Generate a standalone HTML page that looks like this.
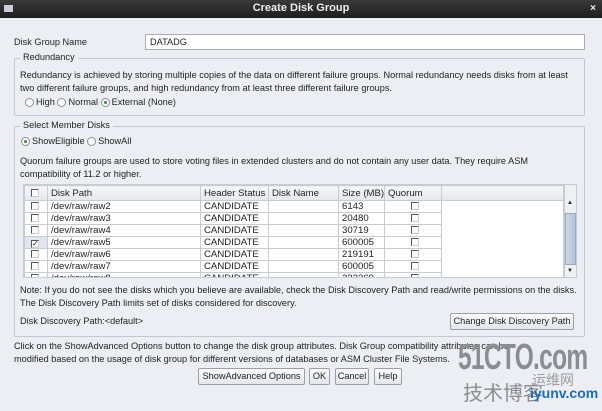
<!DOCTYPE html>
<html><head><meta charset="utf-8"><style>
*{box-sizing:border-box;margin:0;padding:0}
body{width:602px;height:411px;overflow:hidden;background:#eceef3;font-family:"Liberation Sans",sans-serif;font-size:9.2px;color:#222;position:relative}
.a{position:absolute;white-space:nowrap}
#tb{position:absolute;left:0;top:0;width:602px;height:18px;background:linear-gradient(#3a3a3a,#1e1e1e);color:#eee;font-weight:bold;font-size:11px;text-align:center;line-height:17px}
.fs{position:absolute;border:1px solid #c5c8cf;border-radius:2px}
.lg{position:absolute;background:#eceef3;padding:0 3px}
.rb{display:inline-block;width:9px;height:9px;border:1px solid #8a8f99;border-radius:50%;background:#fff;vertical-align:-2px;margin-right:2px;position:relative}
.rb.on::after{content:"";position:absolute;left:2px;top:2px;width:3px;height:3px;border-radius:50%;background:#3a8a3a}
.btn{position:absolute;border:1px solid #9aa0aa;border-radius:2px;background:linear-gradient(#fbfbfc,#e4e6ea);text-align:center;line-height:15px;height:17px;white-space:nowrap}
#tw{position:absolute;left:23px;top:184px;width:541px;height:94px;overflow:hidden;background:#fff;border:1px solid #c8ccd2}
table{border-collapse:collapse;width:541px;font-size:9.6px;table-layout:fixed;white-space:nowrap}
td,th{border:1px solid #c8ccd2;height:12px;padding:0 0 0 3px;font-weight:normal;text-align:left;line-height:11px;overflow:hidden}
th{background:linear-gradient(#f6f7f9,#e5e7eb);height:15px}
.cb{display:inline-block;width:8px;height:8px;border:1px solid #555;border-right-color:#ccc;border-bottom-color:#ccc;background:#fff;vertical-align:-1px;position:relative;font-size:8px;line-height:6px}
</style></head><body>
<div id="tb">Create Disk Group<span style="position:absolute;left:4px;top:5px;width:9px;height:7px;background:#ccd;"></span><span style="position:absolute;right:6px;top:0;font-size:10px">×</span></div>
<div class="a" style="left:14px;top:37px">Disk Group Name</div>
<div class="a" style="left:145px;top:34px;width:440px;height:16px;background:#fff;border:1px solid #aab;padding-left:4px;line-height:14px">DATADG</div>
<div class="fs" style="left:14px;top:58px;width:571px;height:58px"></div>
<div class="lg" style="left:20px;top:52px">Redundancy</div>
<div class="a" style="left:20px;top:69px;line-height:12.5px">Redundancy is achieved by storing multiple copies of the data on different failure groups. Normal redundancy needs disks from at least<br>two different failure groups, and high redundancy from at least three different failure groups.</div>
<div class="a" style="left:25px;top:97px"><span class="rb"></span>High <span class="rb"></span>Normal <span class="rb on"></span>External (None)</div>
<div class="fs" style="left:14px;top:126px;width:571px;height:211px"></div>
<div class="lg" style="left:20px;top:120px">Select Member Disks</div>
<div class="a" style="left:21px;top:136px"><span class="rb on"></span>ShowEligible <span class="rb"></span>ShowAll</div>
<div class="a" style="left:20px;top:155px;line-height:12.5px">Quorum failure groups are used to store voting files in extended clusters and do not contain any user data. They require ASM<br>compatibility of 11.2 or higher.</div>
<div id="tw"><table>
<colgroup><col style="width:23px"><col style="width:153px"><col style="width:68px"><col style="width:70px"><col style="width:46px"><col style="width:57px"><col></colgroup>
<tr><th style="padding-left:6px"><span class="cb"></span></th><th>Disk Path</th><th>Header Status</th><th>Disk Name</th><th>Size (MB)</th><th>Quorum</th><th style="border-right:none"></th></tr>
<tr><td style="padding-left:6px"><span class="cb"></span></td><td>/dev/raw/raw2</td><td>CANDIDATE</td><td></td><td>6143</td><td style="text-align:center"><span class="cb"></span></td><td style="border:none"></td></tr>
<tr><td style="padding-left:6px"><span class="cb"></span></td><td>/dev/raw/raw3</td><td>CANDIDATE</td><td></td><td>20480</td><td style="text-align:center"><span class="cb"></span></td><td style="border:none"></td></tr>
<tr><td style="padding-left:6px"><span class="cb"></span></td><td>/dev/raw/raw4</td><td>CANDIDATE</td><td></td><td>30719</td><td style="text-align:center"><span class="cb"></span></td><td style="border:none"></td></tr>
<tr><td style="padding-left:6px;background:#dfe6f0"><span class="cb">✓</span></td><td>/dev/raw/raw5</td><td>CANDIDATE</td><td></td><td>600005</td><td style="text-align:center"><span class="cb"></span></td><td style="border:none"></td></tr>
<tr><td style="padding-left:6px"><span class="cb"></span></td><td>/dev/raw/raw6</td><td>CANDIDATE</td><td></td><td>219191</td><td style="text-align:center"><span class="cb"></span></td><td style="border:none"></td></tr>
<tr><td style="padding-left:6px"><span class="cb"></span></td><td>/dev/raw/raw7</td><td>CANDIDATE</td><td></td><td>600005</td><td style="text-align:center"><span class="cb"></span></td><td style="border:none"></td></tr>
<tr><td style="padding-left:6px"><span class="cb"></span></td><td>/dev/raw/raw8</td><td>CANDIDATE</td><td></td><td>232369</td><td style="text-align:center"><span class="cb"></span></td><td style="border:none"></td></tr>
</table></div>
<div class="a" style="left:564px;top:184px;width:13px;height:94px;background:#eef0f3;border:1px solid #c8ccd2"></div>
<div class="a" style="left:565px;top:213px;width:11px;height:52px;background:linear-gradient(90deg,#cdd7e6,#b4c3d8);border:1px solid #9aa9bf"></div>
<div class="a" style="left:567px;top:200px;font-size:6px">▲</div>
<div class="a" style="left:567px;top:268px;font-size:6px">▼</div>
<div class="a" style="left:20px;top:284px;line-height:12.5px">Note: If you do not see the disks which you believe are available, check the Disk Discovery Path and read/write permissions on the disks.<br>The Disk Discovery Path limits set of disks considered for discovery.</div>
<div class="a" style="left:20px;top:316px">Disk Discovery Path:&lt;default&gt;</div>
<div class="btn" style="left:450px;top:313px;width:124px">Change Disk Discovery Path</div>
<div class="a" style="left:14px;top:340px;line-height:12.5px">Click on the ShowAdvanced Options button to change the disk group attributes. Disk Group compatibility attributes can be<br>modified based on the usage of disk group for different versions of databases or ASM Cluster File Systems.</div>
<div class="btn" style="left:198px;top:368px;width:107px">ShowAdvanced Options</div>
<div class="btn" style="left:309px;top:368px;width:21px">OK</div>
<div class="btn" style="left:335px;top:368px;width:34px">Cancel</div>
<div class="btn" style="left:374px;top:368px;width:28px">Help</div>
<div class="a" style="left:458px;top:336px;font:bold 36px 'Liberation Sans',sans-serif;color:#8a8d93;letter-spacing:-1px;transform:scaleX(0.68);transform-origin:left">51CTO.com</div>
<div class="a" style="left:463px;top:377px;font:20px 'Noto Sans CJK SC',sans-serif;color:#8a8d93">技术博客</div>
<div class="a" style="left:532px;top:370px;font:14px 'Noto Sans CJK SC',sans-serif;color:#9a9da3">运维网</div>
<div class="a" style="left:530px;top:385px;font:bold 14px 'Liberation Sans',sans-serif;color:#1a6fb8">iyunv.com</div>
</body></html>
